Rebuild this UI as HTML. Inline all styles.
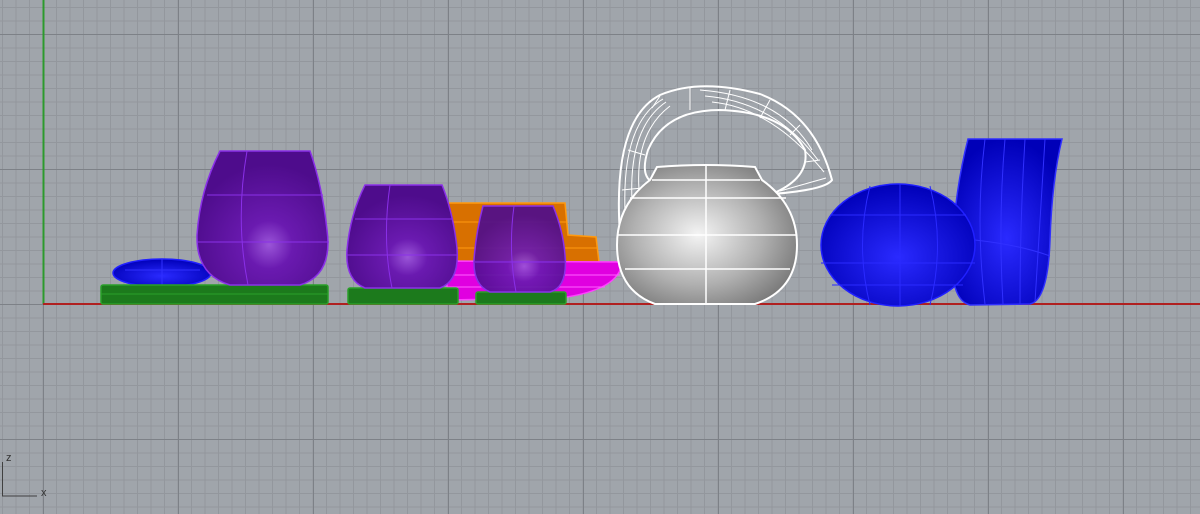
<!DOCTYPE html>
<html><head><meta charset="utf-8"><style>
html,body{margin:0;padding:0}
body{width:1200px;height:514px;overflow:hidden;position:relative;background:#a0a5ab}
svg{position:absolute;left:0;top:0}
.t{position:absolute;font-family:"Liberation Sans",sans-serif;font-size:11px;color:#333}
</style></head><body>
<svg width="1200" height="514" viewBox="0 0 1200 514" shape-rendering="auto">
<defs>
<pattern id="minor" x="2" y="7" width="27" height="27" patternUnits="userSpaceOnUse">
<path d="M0.5 0 V27 M14 0 V27 M0 0.5 H27 M0 14 H27" stroke="#93979d" stroke-width="1" fill="none" shape-rendering="crispEdges"/>
</pattern>
<pattern id="major" x="43" y="34" width="135" height="135" patternUnits="userSpaceOnUse">
<path d="M0.5 0 V135 M0 0.5 H135" stroke="#7d8187" stroke-width="1" fill="none" shape-rendering="crispEdges"/>
</pattern>
<radialGradient id="pu" cx="0.55" cy="0.7" r="0.6"><stop offset="0" stop-color="#9a55d8"/><stop offset="0.3" stop-color="#6a1ab0"/><stop offset="1" stop-color="#4e0c8c"/></radialGradient>
<radialGradient id="bl" cx="0.5" cy="0.6" r="0.6"><stop offset="0" stop-color="#2a2aff"/><stop offset="1" stop-color="#0000b8"/></radialGradient>
<radialGradient id="gr" cx="0.45" cy="0.5" r="0.6"><stop offset="0" stop-color="#f4f4f4"/><stop offset="0.6" stop-color="#b0b0b0"/><stop offset="1" stop-color="#7a7a7a"/></radialGradient>
</defs>
<rect width="1200" height="514" fill="url(#minor)"/>
<rect width="1200" height="514" fill="url(#major)"/>
<line x1="43.5" y1="0" x2="43.5" y2="304" stroke="#2c9a2c" stroke-width="2"/>
<line x1="43" y1="304" x2="1200" y2="304" stroke="#b02020" stroke-width="2"/>
<ellipse cx="162" cy="273" rx="49" ry="14" fill="url(#bl)" stroke="#2020ff" stroke-width="1.5"/>
<path d="M125 270 H200 M162 259 V286" stroke="#3030ff"/>
<rect x="101" y="285" width="227" height="19" rx="2" fill="#1c7a1c" stroke="#2aa02a" stroke-width="1.5"/>
<line x1="101" y1="294" x2="328" y2="294" stroke="#2aa02a"/>
<path d="M220 151 L310 151 Q322 185 327 230 Q333 275 300 285 L230 285 Q196 275 197 235 Q200 190 220 151 Z" fill="url(#pu)" stroke="#8a30e8" stroke-width="1.5"/>
<path d="M207 195 H323 M197 242 H329 M247 151 Q235 220 248 285" stroke="#8a30e8" fill="none"/>
<path d="M447 203 L565 203 L568 235 L596 237 L599 262 L447 262 Z" fill="#d87000" stroke="#ff9a10" stroke-width="1.5"/>
<path d="M447 222 H567 M447 248 H598" stroke="#ff9a10"/>
<path d="M447 261 L622 262 Q620 290 560 298 L447 300 Z" fill="#e000e0" stroke="#ff40ff" stroke-width="1.5"/>
<path d="M447 275 H620 M447 287 H605" stroke="#ff60ff"/>
<rect x="348" y="288" width="110" height="16" rx="2" fill="#1c7a1c" stroke="#2aa02a" stroke-width="1.5"/>
<path d="M365 185 L442 185 Q452 210 456 240 Q462 280 440 288 L365 288 Q345 280 347 250 Q350 215 365 185 Z" fill="url(#pu)" stroke="#8a30e8" stroke-width="1.5"/>
<path d="M355 219 H452 M347 255 H458 M390 185 Q382 240 392 288" stroke="#8a30e8" fill="none"/>
<rect x="476" y="292" width="90" height="12" rx="2" fill="#1c7a1c" stroke="#2aa02a" stroke-width="1.5"/>
<path d="M483 206 L553 206 Q563 230 565 255 Q568 287 550 292 L490 292 Q473 285 474 260 Q476 232 483 206 Z" fill="url(#pu)" fill-opacity="0.92" stroke="#8a30e8" stroke-width="1.5"/>
<path d="M475 262 H566 M514 206 Q508 250 516 292" stroke="#8a30e8" fill="none"/>
<path d="M620 235 Q612 120 660 95 Q700 78 760 94 Q815 115 832 180 Q825 190 772 194 Q810 178 805 150 Q785 112 720 110 Q665 110 648 150 Q640 175 652 182 Z" fill="none" stroke="#fff" stroke-width="2"/>
<path d="M626 228 Q618 125 663 99 M633 215 Q625 130 666 102 M640 200 Q632 135 670 106 M700 90 Q780 96 812 150 M705 96 Q775 102 818 160 M712 102 Q772 108 824 172 M780 191 Q812 182 826 178" stroke="#fff" fill="none" stroke-width="1"/>
<path d="M660 96 L652 108 M690 88 L690 110 M730 90 L725 110 M770 100 L760 118 M800 125 L790 135 M820 160 L805 162 M628 150 L645 155 M622 190 L642 188" stroke="#fff" stroke-width="1"/>
<path d="M657 167 Q706 163 755 167 L762 180 Q797 205 797 245 Q797 290 755 304 L655 304 Q617 290 617 245 Q617 205 650 180 Z" fill="url(#gr)" stroke="#fff" stroke-width="2"/>
<path d="M652 180 H760 M630 198 H786 M618 235 H796 M625 269 H790 M706 164 V304" stroke="#fff" fill="none" stroke-width="1.5"/>
<path d="M968 139 L1062 139 Q1052 180 1050 240 Q1048 300 1030 304 L970 305 Q950 300 952 250 Q955 190 968 139 Z" fill="url(#bl)" stroke="#3030ff" stroke-width="1.5"/>
<path d="M985 139 Q975 220 985 304 M1005 139 Q998 220 1003 304 M1025 139 Q1020 220 1020 304 M1045 139 Q1040 220 1035 302 M975 240 Q1020 245 1050 256" stroke="#3030ff" fill="none"/>
<ellipse cx="898" cy="245" rx="77" ry="61" fill="url(#bl)" stroke="#2020ff" stroke-width="1.5"/>
<path d="M830 215 H966 M821 263 H975 M832 285 H963 M900 184 V306 M870 186 Q855 245 870 305 M930 186 Q945 245 930 305" stroke="#2a2aff" fill="none"/>
<path d="M2.5 462 V496 H37" stroke="#404040" fill="none" stroke-width="1"/>
</svg>
<div class="t" style="left:6px;top:452px">z</div>
<div class="t" style="left:41px;top:487px">x</div>
</body></html>
